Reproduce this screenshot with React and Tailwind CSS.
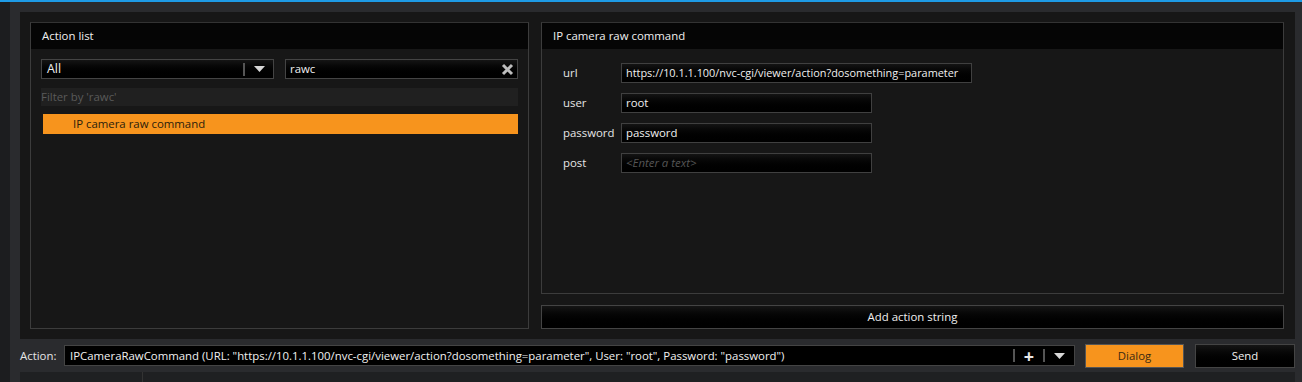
import React from "react";

const font = { fontFamily: '"Open Sans", "Noto Sans", sans-serif' };

const Field = ({ label, value, placeholder, width, size = "text-[11.4px]" }) => (
  <div className="flex items-center h-[20px] mb-[10px]">
    <span className="w-[58px] text-[11.4px] text-[#e6e6e6]">{label}</span>
    <div
      className={`${width} ${size} h-[20px] border border-[#404040] bg-gradient-to-b from-[#141414] to-[#000] flex items-center px-[4px] whitespace-nowrap overflow-hidden`}
    >
      {value ? (
        <span className="text-[#f0f0f0]">{value}</span>
      ) : (
        <span className="italic text-[#555]">{placeholder}</span>
      )}
    </div>
  </div>
);

const Caret = () => (
  <svg width="11" height="6" viewBox="0 0 11 6">
    <path d="M0 0h11L5.5 6z" fill="#d8d8d8" />
  </svg>
);

export default function App() {
  return (
    <div
      className="w-[1302px] h-[382px] bg-[#2a2b2e] flex flex-col overflow-hidden"
      style={font}
    >
      <div className="h-[2px] bg-[#1e9be6]" />
      <div className="flex flex-1">
        <div className="w-[10px] bg-[#1c1d1f]" />
        <div className="flex-1 flex flex-col pl-[10px] pr-[7px] pt-[10px]">
          <div className="h-[327px] bg-[#171717] flex gap-[12px] pl-[10px] pr-[11px] pt-[10px] pb-[10px]">
            {/* Action list */}
            <div className="w-[499px] border border-[#3c3c3c] border-t-[#333] flex flex-col">
              <div className="h-[26px] bg-[#050505] flex items-center pl-[11px] text-[11.4px] text-[#f0f0f0]">
                Action list
              </div>
              <div className="flex-1 px-[10px] pt-[10px]">
                <div className="flex gap-[11px]">
                  <div className="w-[233px] h-[20px] border border-[#444] bg-gradient-to-b from-[#151515] to-[#000] flex items-center text-[12.4px] text-[#f0f0f0]">
                    <span className="flex-1 pl-[5px]">All</span>
                    <div className="w-[2px] h-[13px] bg-[#555]" />
                    <div className="w-[28px] flex justify-center">
                      <Caret />
                    </div>
                  </div>
                  <div className="w-[233px] h-[20px] border border-[#444] bg-gradient-to-b from-[#151515] to-[#000] flex items-center text-[11.4px] text-[#f0f0f0]">
                    <span className="flex-1 pl-[4px]">rawc</span>
                    <svg width="13" height="13" viewBox="0 0 13 13" className="mr-[3px]">
                      <path d="M2 2l9 9M11 2l-9 9" stroke="#bdbdbd" strokeWidth="3" />
                    </svg>
                  </div>
                </div>
                <div className="mt-[9px] h-[18px] bg-[#202020] flex items-center text-[11.4px] text-[#5a5a5a]">
                  Filter by 'rawc'
                </div>
                <div className="mt-[8px] ml-[2px] h-[20px] bg-[#f7941d] flex items-center pl-[30px] text-[11.4px] text-[#2a1d0c]">
                  IP camera raw command
                </div>
              </div>
            </div>
            {/* Right column */}
            <div className="flex-1 flex flex-col">
              <div className="h-[272px] border border-[#3c3c3c] border-t-[#333] flex flex-col">
                <div className="h-[26px] bg-[#050505] flex items-center pl-[11px] text-[11.4px] text-[#f0f0f0]">
                  IP camera raw command
                </div>
                <div className="pl-[21px] pt-[14px]">
                  <Field
                    label="url"
                    width="w-[351px]"
                    size="text-[10.9px]"
                    value="https://10.1.1.100/nvc-cgi/viewer/action?dosomething=parameter"
                  />
                  <Field label="user" width="w-[251px]" value="root" />
                  <Field label="password" width="w-[251px]" value="password" />
                  <Field label="post" width="w-[251px]" placeholder="<Enter a text>" />
                </div>
              </div>
              <div className="mt-[11px] h-[24px] border border-[#444] bg-gradient-to-b from-[#151515] to-[#000] flex items-center justify-center text-[11.4px] text-[#f0f0f0]">
                Add action string
              </div>
            </div>
          </div>
          {/* Action row */}
          <div className="h-[33px] flex items-center">
            <span className="w-[44px] text-[11.4px] text-[#e6e6e6]">Action:</span>
            <div className="w-[1011px] h-[21px] border border-[#444] bg-[#000] flex items-center text-[11.4px] text-[#f0f0f0]">
              <span className="flex-1 pl-[5px] whitespace-nowrap overflow-hidden">
                IPCameraRawCommand (URL: "https://10.1.1.100/nvc-cgi/viewer/action?dosomething=parameter", User: "root", Password: "password")
              </span>
              <div className="w-[2px] h-[13px] bg-[#555]" />
              <span className="w-[28px] text-center text-[18px] leading-none font-bold text-[#e8e8e8]">+</span>
              <div className="w-[2px] h-[13px] bg-[#555]" />
              <div className="w-[29px] flex justify-center">
                <Caret />
              </div>
            </div>
            <div className="ml-[10px] w-[99px] h-[24px] bg-[#f7941d] border border-[#555] flex items-center justify-center text-[11.4px] text-[#3a2a12]">
              Dialog
            </div>
            <div className="ml-[11px] w-[100px] h-[24px] border border-[#444] bg-gradient-to-b from-[#151515] to-[#000] flex items-center justify-center text-[11.4px] text-[#f0f0f0]">
              Send
            </div>
          </div>
          <div className="flex-1 flex bg-[#1f2022]">
            <div className="w-[123px] border-r border-[#333]" />
          </div>
        </div>
      </div>
    </div>
  );
}
